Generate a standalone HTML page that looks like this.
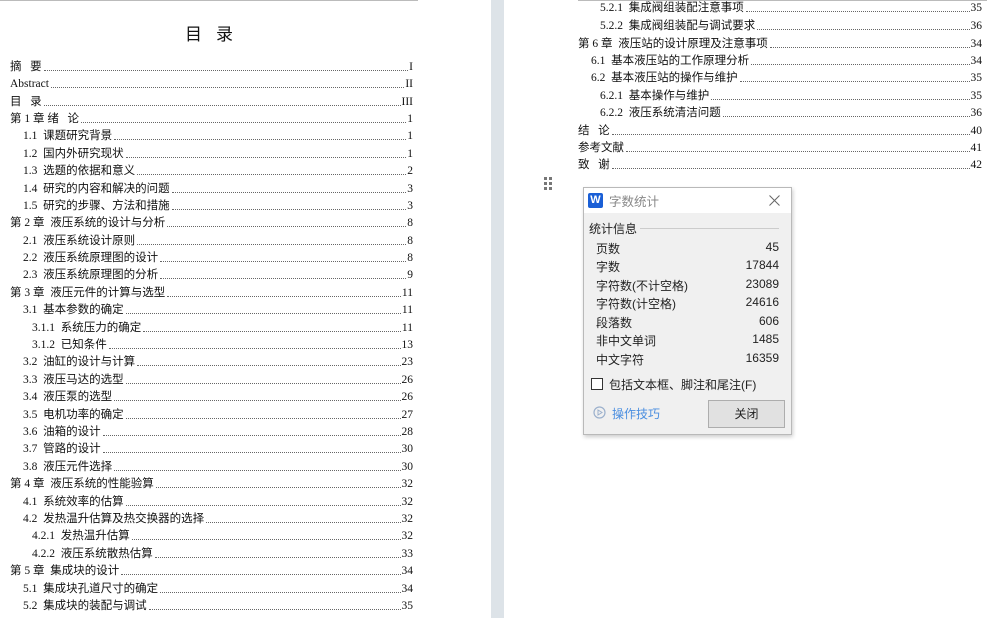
<!DOCTYPE html>
<html><head><meta charset="utf-8"><style>
*{margin:0;padding:0;box-sizing:border-box}
body{width:987px;height:618px;background:#fff;position:relative;overflow:hidden;font-family:"Liberation Serif","Noto Sans CJK SC",serif;color:#111}
.r{position:absolute;display:flex;align-items:flex-end;height:14px;font-size:11.5px;line-height:14px;white-space:nowrap;margin-top:2px}
.r .d{flex:1;border-bottom:1px dotted #666;margin:0 1px 3px 2px;height:1px}
.L{left:10px;width:403px}.L1{left:23px;width:390px}.L2{left:32px;width:381px}
.R{left:578px;width:404px}.R1{left:591px;width:391px}.R2{left:600px;width:382px}
.dlg{position:absolute;left:583px;top:187px;width:209px;height:248px;background:#f0f0f0;border:1px solid #b9b9b9;box-shadow:1px 2px 4px rgba(0,0,0,.2);font-family:"Liberation Sans","Noto Sans CJK SC",sans-serif;font-size:12px;color:#222}
.tb{height:25px;background:#fff;position:relative}
.row{position:absolute;left:12px;right:12px;display:flex;justify-content:space-between;font-size:12px}
</style></head><body>
<div style="position:absolute;left:0;top:0;width:418px;height:1px;background:#bbb"></div>
<div style="position:absolute;left:578px;top:0;width:409px;height:1px;background:#bbb"></div>
<div style="position:absolute;left:491px;top:0;width:13px;height:618px;background:#dde3e8"></div>
<div style="position:absolute;left:0;top:20px;width:418px;text-align:center;font-size:17px;font-family:'Noto Sans CJK SC',sans-serif;letter-spacing:14px;padding-left:14px">目录</div>

<div class="r L" style="top:58px"><span>摘&nbsp;&nbsp;&nbsp;要</span><span class="d"></span><span>I</span></div>
<div class="r L" style="top:75px"><span>Abstract</span><span class="d"></span><span>II</span></div>
<div class="r L" style="top:93px"><span>目&nbsp;&nbsp;&nbsp;录</span><span class="d"></span><span>III</span></div>
<div class="r L" style="top:110px"><span>第 1 章 绪&nbsp;&nbsp;&nbsp;论</span><span class="d"></span><span>1</span></div>
<div class="r L1" style="top:127px"><span>1.1&nbsp; 课题研究背景</span><span class="d"></span><span>1</span></div>
<div class="r L1" style="top:145px"><span>1.2&nbsp; 国内外研究现状</span><span class="d"></span><span>1</span></div>
<div class="r L1" style="top:162px"><span>1.3&nbsp; 选题的依据和意义</span><span class="d"></span><span>2</span></div>
<div class="r L1" style="top:180px"><span>1.4&nbsp; 研究的内容和解决的问题</span><span class="d"></span><span>3</span></div>
<div class="r L1" style="top:197px"><span>1.5&nbsp; 研究的步骤、方法和措施</span><span class="d"></span><span>3</span></div>
<div class="r L" style="top:214px"><span>第 2 章&nbsp; 液压系统的设计与分析</span><span class="d"></span><span>8</span></div>
<div class="r L1" style="top:232px"><span>2.1&nbsp; 液压系统设计原则</span><span class="d"></span><span>8</span></div>
<div class="r L1" style="top:249px"><span>2.2&nbsp; 液压系统原理图的设计</span><span class="d"></span><span>8</span></div>
<div class="r L1" style="top:266px"><span>2.3&nbsp; 液压系统原理图的分析</span><span class="d"></span><span>9</span></div>
<div class="r L" style="top:284px"><span>第 3 章&nbsp; 液压元件的计算与选型</span><span class="d"></span><span>11</span></div>
<div class="r L1" style="top:301px"><span>3.1&nbsp; 基本参数的确定</span><span class="d"></span><span>11</span></div>
<div class="r L2" style="top:319px"><span>3.1.1&nbsp; 系统压力的确定</span><span class="d"></span><span>11</span></div>
<div class="r L2" style="top:336px"><span>3.1.2&nbsp; 已知条件</span><span class="d"></span><span>13</span></div>
<div class="r L1" style="top:353px"><span>3.2&nbsp; 油缸的设计与计算</span><span class="d"></span><span>23</span></div>
<div class="r L1" style="top:371px"><span>3.3&nbsp; 液压马达的选型</span><span class="d"></span><span>26</span></div>
<div class="r L1" style="top:388px"><span>3.4&nbsp; 液压泵的选型</span><span class="d"></span><span>26</span></div>
<div class="r L1" style="top:406px"><span>3.5&nbsp; 电机功率的确定</span><span class="d"></span><span>27</span></div>
<div class="r L1" style="top:423px"><span>3.6&nbsp; 油箱的设计</span><span class="d"></span><span>28</span></div>
<div class="r L1" style="top:440px"><span>3.7&nbsp; 管路的设计</span><span class="d"></span><span>30</span></div>
<div class="r L1" style="top:458px"><span>3.8&nbsp; 液压元件选择</span><span class="d"></span><span>30</span></div>
<div class="r L" style="top:475px"><span>第 4 章&nbsp; 液压系统的性能验算</span><span class="d"></span><span>32</span></div>
<div class="r L1" style="top:493px"><span>4.1&nbsp; 系统效率的估算</span><span class="d"></span><span>32</span></div>
<div class="r L1" style="top:510px"><span>4.2&nbsp; 发热温升估算及热交换器的选择</span><span class="d"></span><span>32</span></div>
<div class="r L2" style="top:527px"><span>4.2.1&nbsp; 发热温升估算</span><span class="d"></span><span>32</span></div>
<div class="r L2" style="top:545px"><span>4.2.2&nbsp; 液压系统散热估算</span><span class="d"></span><span>33</span></div>
<div class="r L" style="top:562px"><span>第 5 章&nbsp; 集成块的设计</span><span class="d"></span><span>34</span></div>
<div class="r L1" style="top:580px"><span>5.1&nbsp; 集成块孔道尺寸的确定</span><span class="d"></span><span>34</span></div>
<div class="r L1" style="top:597px"><span>5.2&nbsp; 集成块的装配与调试</span><span class="d"></span><span>35</span></div>

<div class="r R2" style="top:-1px"><span>5.2.1&nbsp; 集成阀组装配注意事项</span><span class="d"></span><span>35</span></div>
<div class="r R2" style="top:17px"><span>5.2.2&nbsp; 集成阀组装配与调试要求</span><span class="d"></span><span>36</span></div>
<div class="r R" style="top:35px"><span>第 6 章&nbsp; 液压站的设计原理及注意事项</span><span class="d"></span><span>34</span></div>
<div class="r R1" style="top:52px"><span>6.1&nbsp; 基本液压站的工作原理分析</span><span class="d"></span><span>34</span></div>
<div class="r R1" style="top:69px"><span>6.2&nbsp; 基本液压站的操作与维护</span><span class="d"></span><span>35</span></div>
<div class="r R2" style="top:87px"><span>6.2.1&nbsp; 基本操作与维护</span><span class="d"></span><span>35</span></div>
<div class="r R2" style="top:104px"><span>6.2.2&nbsp; 液压系统清洁问题</span><span class="d"></span><span>36</span></div>
<div class="r R" style="top:122px"><span>结&nbsp;&nbsp;&nbsp;论</span><span class="d"></span><span>40</span></div>
<div class="r R" style="top:139px"><span>参考文献</span><span class="d"></span><span>41</span></div>
<div class="r R" style="top:156px"><span>致&nbsp;&nbsp;&nbsp;谢</span><span class="d"></span><span>42</span></div>

<svg style="position:absolute;left:544px;top:177px" width="9" height="14"><g fill="#777"><rect x="0" y="0" width="3" height="3"/><rect x="5" y="0" width="3" height="3"/><rect x="0" y="5" width="3" height="3"/><rect x="5" y="5" width="3" height="3"/><rect x="0" y="10" width="3" height="3"/><rect x="5" y="10" width="3" height="3"/></g></svg>

<div class="dlg">
 <div class="tb">
  <div style="position:absolute;left:4px;top:5px;width:15px;height:15px;background:#1a5fd6;border-radius:2px;color:#fff;font-weight:bold;font-size:11px;text-align:center;line-height:15px">W</div>
  <div style="position:absolute;left:25px;top:3px;color:#888;font-size:12.5px">字数统计</div>
  <svg style="position:absolute;left:185px;top:7px" width="11" height="11"><path d="M0.5 0.5L10.5 10.5M10.5 0.5L0.5 10.5" stroke="#666" stroke-width="1"/></svg>
 </div>
 <div style="position:absolute;left:5px;top:32px">统计信息</div>
 <div style="position:absolute;left:56px;top:40px;right:12px;height:1px;background:#ccc"></div>
 <div class="row" style="top:52px"><span>页数</span><span>45</span></div>
 <div class="row" style="top:70px"><span>字数</span><span>17844</span></div>
 <div class="row" style="top:89px"><span>字符数(不计空格)</span><span>23089</span></div>
 <div class="row" style="top:107px"><span>字符数(计空格)</span><span>24616</span></div>
 <div class="row" style="top:126px"><span>段落数</span><span>606</span></div>
 <div class="row" style="top:144px"><span>非中文单词</span><span>1485</span></div>
 <div class="row" style="top:163px"><span>中文字符</span><span>16359</span></div>
 <div style="position:absolute;left:7px;top:190px;width:12px;height:12px;border:1px solid #333;background:#fff"></div>
 <div style="position:absolute;left:25px;top:188px">包括文本框、脚注和尾注(F)</div>
 <svg style="position:absolute;left:9px;top:218px" width="13" height="13"><circle cx="6.5" cy="6.5" r="5.5" fill="none" stroke="#9bb0cc" stroke-width="1.2"/><path d="M5 4L9 6.5L5 9Z" fill="none" stroke="#9bb0cc"/></svg>
 <div style="position:absolute;left:28px;top:217px;color:#4a8ee0">操作技巧</div>
 <div style="position:absolute;left:124px;top:212px;width:77px;height:28px;border:1px solid #adadad;background:#e1e1e1;text-align:center;line-height:26px">关闭</div>
</div>
</body></html>
